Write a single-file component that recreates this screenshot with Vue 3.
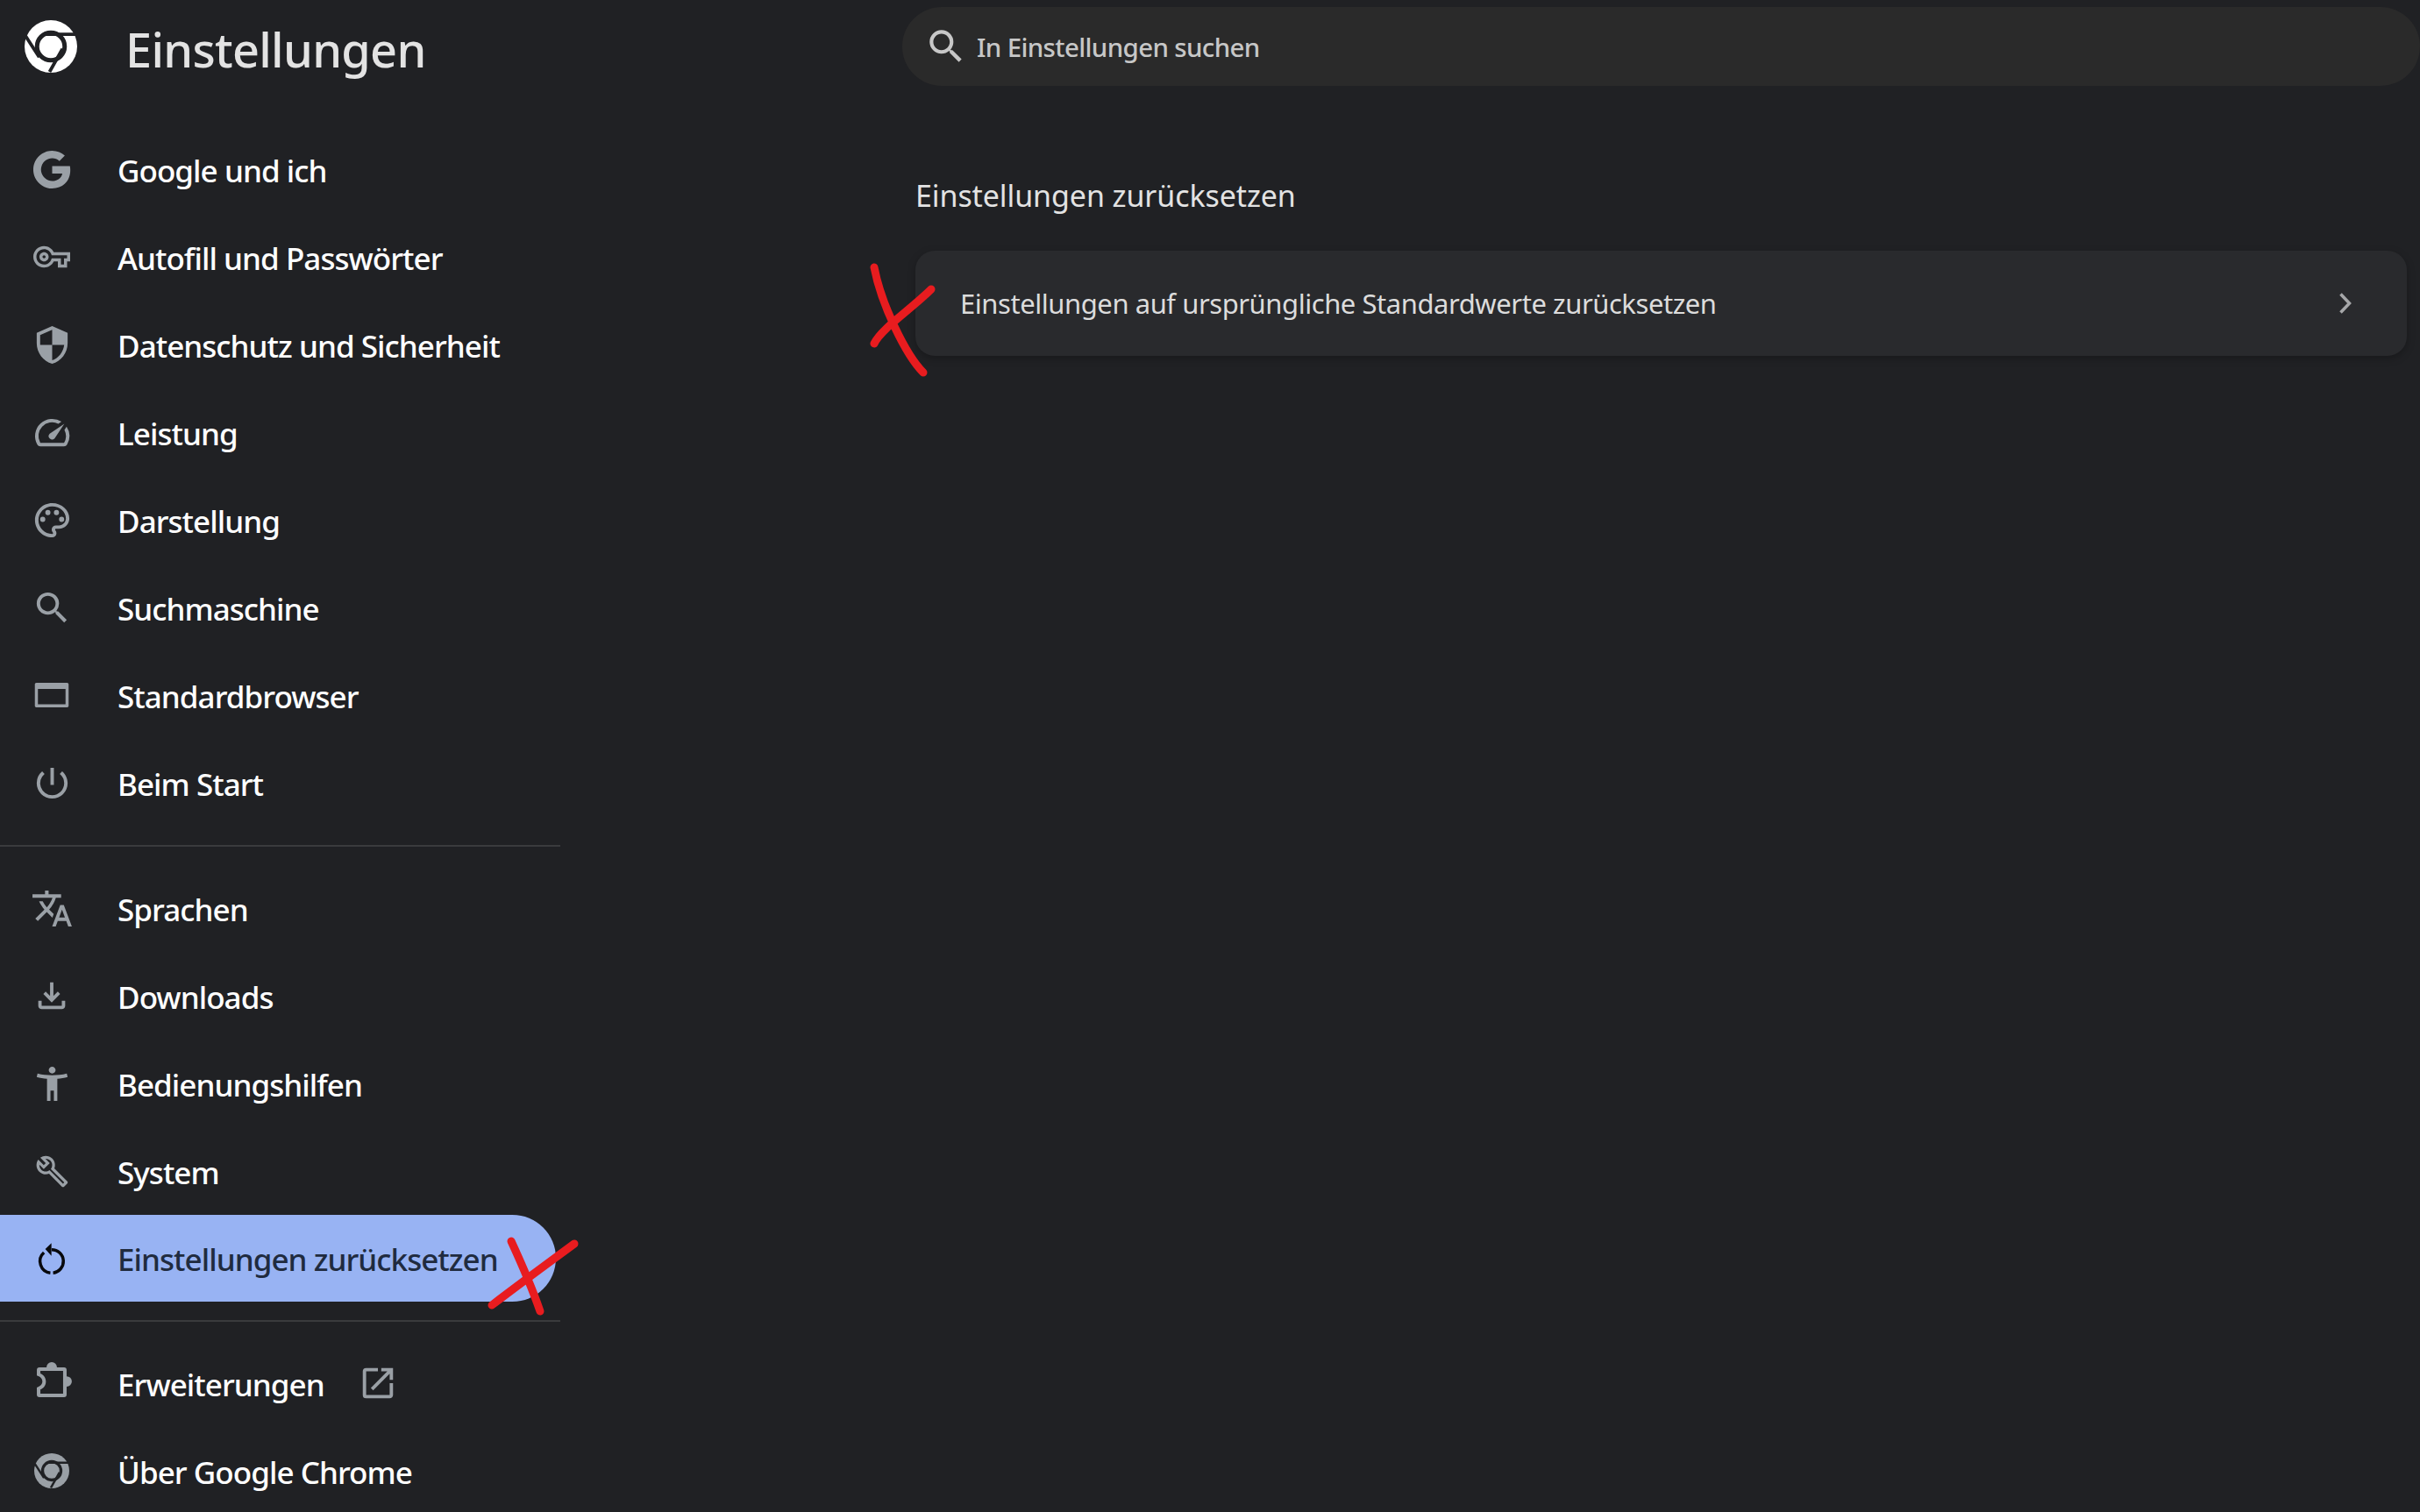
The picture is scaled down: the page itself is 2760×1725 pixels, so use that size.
<script setup>
const P = {
  google: 'M22.56 12.25c0-.78-.07-1.53-.2-2.25H12v4.26h5.92c-.26 1.37-1.04 2.53-2.21 3.31v2.77h3.57c2.08-1.92 3.28-4.74 3.28-8.09zM12 23c2.97 0 5.46-.98 7.28-2.66l-3.57-2.77c-.98.66-2.23 1.06-3.71 1.06-2.86 0-5.29-1.93-6.16-4.53H2.18v2.84C3.99 20.53 7.7 23 12 23zM5.84 14.09c-.22-.66-.35-1.36-.35-2.09s.13-1.43.35-2.09V7.07H2.18C1.43 8.55 1 10.22 1 12s.43 3.45 1.18 4.93l3.66-2.84zM12 5.38c1.62 0 3.06.56 4.21 1.64l3.15-3.15C17.45 2.09 14.97 1 12 1 7.7 1 3.99 3.47 2.18 7.07l3.66 2.84c.87-2.6 3.3-4.53 6.16-4.53z',
  key: 'M22 19h-6v-4h-2.68c-1.14 2.42-3.6 4-6.32 4-3.86 0-7-3.14-7-7s3.14-7 7-7c2.72 0 5.17 1.58 6.32 4H24v6h-2v4zm-4-2h2v-4h2v-2H11.94l-.23-.67C11.01 8.34 9.11 7 7 7c-2.76 0-5 2.24-5 5s2.24 5 5 5c2.11 0 4.01-1.34 4.71-3.33l.23-.67H18v4zM7 15c-1.65 0-3-1.35-3-3s1.35-3 3-3 3 1.35 3 3-1.35 3-3 3zm0-4c-.55 0-1 .45-1 1s.45 1 1 1 1-.45 1-1-.45-1-1-1z',
  shield: 'M12 1L3 5v6c0 5.55 3.84 10.74 9 12 5.16-1.26 9-6.45 9-12V5l-9-4zm0 10.99h7c-.53 4.12-3.28 7.79-7 8.94V12H5V6.3l7-3.11v8.8z',
  speed: 'M20.38 8.57l-1.23 1.85a8 8 0 0 1-.22 7.58H5.07A8 8 0 0 1 15.58 6.85l1.85-1.23A10 10 0 0 0 3.35 19a2 2 0 0 0 1.72 1h13.85a2 2 0 0 0 1.74-1 10 10 0 0 0-.27-10.44zM10.59 15.41a2 2 0 0 0 2.83 0l5.66-8.49-8.49 5.66a2 2 0 0 0 0 2.83z',
  palette: 'M12 22C6.49 22 2 17.51 2 12S6.49 2 12 2s10 4.04 10 9c0 3.31-2.69 6-6 6h-1.77c-.28 0-.5.22-.5.5 0 .12.05.23.13.33.41.47.64 1.06.64 1.67A2.5 2.5 0 0 1 12 22zm0-18c-4.41 0-8 3.59-8 8s3.59 8 8 8c.28 0 .5-.22.5-.5a.54.54 0 0 0-.14-.35c-.41-.46-.63-1.05-.63-1.65a2.5 2.5 0 0 1 2.5-2.5H16c2.21 0 4-1.79 4-4 0-3.86-3.59-7-8-7zM6.5 10a1.5 1.5 0 1 1 0 3 1.5 1.5 0 0 1 0-3zM9.5 6a1.5 1.5 0 1 1 0 3 1.5 1.5 0 0 1 0-3zM14.5 6a1.5 1.5 0 1 1 0 3 1.5 1.5 0 0 1 0-3zM17.5 10a1.5 1.5 0 1 1 0 3 1.5 1.5 0 0 1 0-3z',
  search: 'M15.5 14h-.79l-.28-.27A6.471 6.471 0 0 0 16 9.5 6.5 6.5 0 1 0 9.5 16c1.61 0 3.09-.59 4.23-1.57l.27.28v.79l5 4.99L20.49 19l-4.99-5zm-6 0C7.01 14 5 11.99 5 9.5S7.01 5 9.5 5 14 7.01 14 9.5 11.99 14 9.5 14z',
  browser: 'M2 4h20c.6 0 1 .4 1 1v14c0 .6-.4 1-1 1H2c-.6 0-1-.4-1-1V5c0-.6.4-1 1-1zm1 4v10h18V8H3z',
  power: 'M13 3h-2v10h2V3zm4.83 2.17l-1.42 1.42A6.92 6.92 0 0 1 19 12c0 3.87-3.13 7-7 7A6.995 6.995 0 0 1 7.58 6.58L6.17 5.17A8.932 8.932 0 0 0 3 12a9 9 0 0 0 18 0c0-2.74-1.23-5.18-3.17-6.83z',
  translate: 'M12.87 15.07l-2.54-2.51.03-.03A17.52 17.52 0 0 0 14.07 6H17V4h-7V2H8v2H1v1.99h11.17C11.5 7.92 10.44 9.75 9 11.35 8.07 10.32 7.3 9.19 6.69 8h-2c.73 1.63 1.73 3.17 2.98 4.56l-5.09 5.02L4 19l5-5 3.11 3.11.76-2.04zM18.5 10h-2L12 22h2l1.12-3h4.75L21 22h2l-4.5-12zm-2.62 7l1.62-4.33L19.12 17h-3.24z',
  download: 'M12 16l-5-5 1.4-1.45 2.6 2.6V4h2v8.15l2.6-2.6L17 11l-5 5zM6 20c-.55 0-1.02-.2-1.41-.59A1.93 1.93 0 0 1 4 18v-3h2v3h12v-3h2v3c0 .55-.2 1.02-.59 1.41-.39.39-.86.59-1.41.59H6z',
  access: 'M20.5 6c-2.61.7-5.67 1-8.5 1s-5.89-.3-8.5-1L3 8c1.86.5 4 .83 6 1v13h2v-6h2v6h2V9c2-.17 4.14-.5 6-1l-.5-2zM12 6c1.1 0 2-.9 2-2s-.9-2-2-2-2 .9-2 2 .9 2 2 2z',
  build: 'M22.61 18.99l-9.08-9.08c.93-2.34.45-5.1-1.44-7C9.79.61 6.21.4 3.66 2.25L7.5 6.1 6.08 7.5 2.25 3.69C.4 6.23.61 9.82 2.91 12.11c1.86 1.86 4.57 2.35 6.88 1.48l9.11 9.11c.39.39 1.02.39 1.41 0l2.3-2.3c.4-.38.4-1.01 0-1.41zm-3 1.6l-9.46-9.46c-.61.45-1.29.72-2 .82-1.36.2-2.79-.21-3.83-1.25C3.37 9.76 2.93 8.5 3 7.26l3.09 3.09 4.24-4.24-3.09-3.09c1.24-.07 2.49.37 3.44 1.31a4.469 4.469 0 0 1 1.24 3.96 4.35 4.35 0 0 1-.88 1.96l9.45 9.45-.88.88z',
  chrome: 'M12 0a12 12 0 1 0 0 24 12 12 0 0 0 0-24z',
  extension: 'M4 1.7H8.6a3.4 3.4 0 0 1 6.8 0H20a1.7 1.7 0 0 1 1.7 1.7V7.5a3.4 3.4 0 0 1 0 6.8V19.4a1.7 1.7 0 0 1-1.7 1.7H4a1.7 1.7 0 0 1-1.7-1.7V14.9c2.6-1 3.6-2.4 3.6-4s-1-3-3.6-3.9V3.4A1.7 1.7 0 0 1 4 1.7zM4.6 4V5.7c2.6 1.2 3.6 3.1 3.6 5.2s-.9 4.1-3.6 5.3v2.6H19.4V4z',
  restore: 'M12 5.1A8.6 8.6 0 0 1 13 22.24L12.8 20.25A6.6 6.6 0 0 0 12 7.1zM11 22.24A8.6 8.6 0 0 1 6.26 7.29L7.6 8.78A6.6 6.6 0 0 0 11.2 20.25zM7.8 5.7L11.8 1.9V10.1z'
}
const chromeGaps = 'M0.4 7.1 6.7 16.9M23.4 6.4H9.3M11.4 23.6 17.3 13.1'
const groups = [
  [
    { label: 'Google und ich', icon: 'google' },
    { label: 'Autofill und Passwörter', icon: 'key' },
    { label: 'Datenschutz und Sicherheit', icon: 'shield' },
    { label: 'Leistung', icon: 'speed' },
    { label: 'Darstellung', icon: 'palette' },
    { label: 'Suchmaschine', icon: 'search' },
    { label: 'Standardbrowser', icon: 'browser' },
    { label: 'Beim Start', icon: 'power' }
  ],
  [
    { label: 'Sprachen', icon: 'translate' },
    { label: 'Downloads', icon: 'download' },
    { label: 'Bedienungshilfen', icon: 'access' },
    { label: 'System', icon: 'build' },
    { label: 'Einstellungen zurücksetzen', icon: 'restore', active: true }
  ],
  [
    { label: 'Erweiterungen', icon: 'extension', external: true },
    { label: 'Über Google Chrome', icon: 'chrome' }
  ]
]
</script>

<template>
  <div class="page">
    <aside class="side">
      <header class="brand">
        <svg class="logo" viewBox="0 0 24 24">
          <path :d="P.chrome" />
          <circle class="gap" cx="12" cy="12" r="6.3" />
          <path class="gap" :d="chromeGaps" />
        </svg>
        <h1>Einstellungen</h1>
      </header>
      <nav>
        <template v-for="(g, i) in groups" :key="i">
          <hr v-if="i" />
          <a v-for="item in g" :key="item.label" class="row" :class="{ active: item.active }">
            <svg class="ico" :class="'i-' + item.icon" viewBox="0 0 24 24">
              <path :d="P[item.icon]" />
              <template v-if="item.icon === 'chrome'">
                <circle class="gap" cx="12" cy="12" r="6.3" />
                <path class="gap" :d="chromeGaps" />
              </template>
            </svg>
            <span>{{ item.label }}</span>
            <svg v-if="item.external" class="ext" viewBox="0 0 24 24"><path d="M19 19H5V5h7V3H5a2 2 0 0 0-2 2v14a2 2 0 0 0 2 2h14c1.1 0 2-.9 2-2v-7h-2v7zM14 3v2h3.59l-9.83 9.83 1.41 1.41L19 6.41V10h2V3h-7z" /></svg>
          </a>
        </template>
      </nav>
    </aside>
    <main class="main">
      <div class="searchbar">
        <svg viewBox="0 0 24 24"><path :d="P.search" /></svg>
        <span>In Einstellungen suchen</span>
      </div>
      <section class="content">
        <h2>Einstellungen zurücksetzen</h2>
        <div class="card">
          <span>Einstellungen auf ursprüngliche Standardwerte zurücksetzen</span>
          <svg class="chev" viewBox="0 0 16 24"><path d="M2.5 1.5 12.5 12 2.5 22.5" /></svg>
        </div>
      </section>
    </main>
    <svg class="marks" viewBox="0 0 2760 1725">
      <path d="M997 305c8 42 36 100 56 120M1062 330C1040 352 1005 375 997 392" />
      <path d="M583 1416c12 26 24 54 33 80M655 1419c-30 22-60 44-94 70" />
    </svg>
  </div>
</template>

<style>
html, body { margin: 0; background: #202124; }
</style>

<style scoped>
.page {
  position: relative;
  display: flex;
  width: 2760px;
  height: 1725px;
  overflow: hidden;
  background: #202124;
  font-family: "Noto Sans", "Open Sans", sans-serif;
}
.side { width: 639px; flex: none; }
.brand {
  display: flex;
  align-items: center;
  gap: 55px;
  height: 106px;
  padding-left: 28px;
  margin-bottom: 37px;
}
.logo { width: 60px; height: 60px; fill: #fff; }
.gap { fill: none; stroke: #202124; stroke-width: 1.5; }
circle.gap { stroke-width: 2; }
h1 {
  margin: 0;
  padding-top: 5px;
  color: #e3e3e3;
  font-size: 54px;
  font-weight: 500;
  letter-spacing: -0.7px;
}
.row {
  display: flex;
  align-items: center;
  height: 100px;
  box-sizing: border-box;
  padding-left: 38px;
  color: #fff;
  font-size: 35px;
  font-weight: 500;
  letter-spacing: -0.95px;
}
.row span { margin-left: 54px; padding-top: 2px; }
.ico {
  width: 47px;
  height: 47px;
  margin: 0 -2.5px;
  flex: none;
  fill: #9aa0a6;
  overflow: visible;
}
.i-key, .i-browser, .i-extension, .i-restore { width: 42px; height: 42px; margin: 0; }
.i-extension { fill-rule: evenodd; }
.i-build { width: 39px; height: 39px; margin: 0 1.5px; }
.i-chrome { width: 40px; height: 40px; margin: 0 1px; overflow: hidden; }
.i-translate { width: 49px; height: 49px; margin: 0 -3.5px; }
.i-download { width: 46px; height: 46px; margin: 0 -2px; }
hr {
  border: 0;
  height: 2px;
  margin: 21px 0 20px;
  background: #3a3b3d;
}
.active {
  width: 634px;
  height: 99px;
  background: #98b3f3;
  border-radius: 0 50px 50px 0;
  color: #202b3f;
}
.active .ico { fill: #08090c; }
.ext { width: 46px; height: 46px; margin-left: 38px; fill: #9aa0a6; }
.main { flex: 1; min-width: 0; padding: 8px 0 0 390px; }
.searchbar {
  display: flex;
  align-items: center;
  height: 90px;
  padding-left: 25px;
  border-radius: 45px;
  background: #2a2a2a;
  color: #c7c7c7;
  font-size: 29.5px;
  font-weight: 500;
  letter-spacing: -0.65px;
}
.searchbar svg { width: 50px; height: 50px; fill: #c7c7c7; margin-right: 10px; }
.content { padding: 0 15px; }
h2 {
  margin: 0;
  padding-top: 102px;
  color: #e3e3e3;
  font-size: 34px;
  font-weight: 400;
  line-height: 46px;
  letter-spacing: -0.1px;
}
.card {
  display: flex;
  align-items: center;
  justify-content: space-between;
  height: 120px;
  margin-top: 40px;
  padding: 0 62px 0 51px;
  border-radius: 22px;
  background: #292a2d;
  color: #dcdcdc;
  font-size: 31px;
  letter-spacing: -0.45px;
  box-shadow: 0 3px 10px rgba(0, 0, 0, 0.25);
}
.chev { width: 16px; height: 24px; fill: none; stroke: #a6a7a9; stroke-width: 3.5; }
.marks {
  position: absolute;
  inset: 0;
  width: 2760px;
  height: 1725px;
  fill: none;
  stroke: #e81c1f;
  stroke-width: 9;
  stroke-linecap: round;
  pointer-events: none;
}
</style>
